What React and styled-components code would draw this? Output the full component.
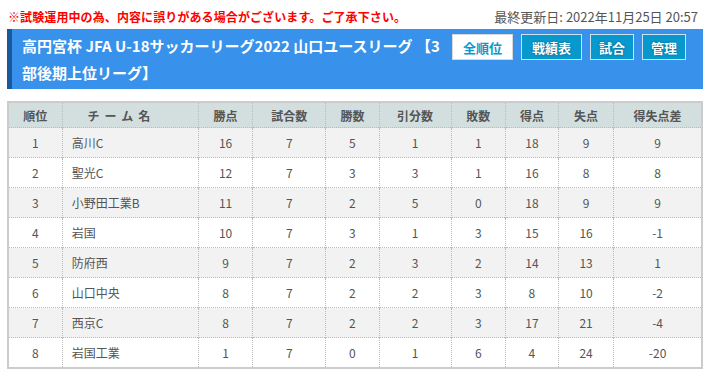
import React from 'react';
import styled, { createGlobalStyle } from 'styled-components';

const GlobalStyle = createGlobalStyle`
  html, body {
    margin: 0;
    padding: 0;
    background: #fff;
  }

  body {
    font-family: "Noto Sans CJK JP", "Noto Sans", sans-serif;
    color: #555;
  }
`;

const Page = styled.div`
  padding: 3px 8px 0 7px;
`;

const TopLine = styled.div`
  display: flex;
  justify-content: space-between;
  align-items: center;
  height: 26px;
  padding: 0 5px 0 1px;
`;

const Notice = styled.span`
  color: #f00;
  font-size: 12px;
  font-weight: 700;
  letter-spacing: 0.1px;
`;

const Updated = styled.span`
  color: #555;
  font-size: 13px;
`;

const HeadBar = styled.div`
  display: flex;
  align-items: flex-start;
  background: #3891ea;
  border-left: 5px solid #19599c;
  padding: 3px 17px 3px 10px;
  min-height: 54px;
`;

const Title = styled.h1`
  flex: 1;
  margin: 0;
  color: #fff;
  font-size: 15px;
  font-weight: 700;
  line-height: 27px;
  max-width: 424px;
  line-break: anywhere;
`;

const Nav = styled.div`
  display: flex;
  gap: 8px;
  margin: 2px 0 0 auto;
`;

const NavButton = styled.a`
  display: flex;
  align-items: center;
  justify-content: center;
  height: 24px;
  padding: 0 ${({ $wide }) => ($wide ? '10px' : '8px')};
  border: 1px solid ${({ $active }) => ($active ? '#d8d8d8' : '#cfe3ee')};
  background: ${({ $active }) => ($active ? '#fff' : '#0798cd')};
  color: ${({ $active }) => ($active ? '#0798cd' : '#fff')};
  font-size: 13px;
  font-weight: 700;
  text-decoration: none;
  text-shadow: ${({ $active }) => ($active ? 'none' : '0 0 2px rgba(0, 0, 0, 0.45)')};
`;

const Table = styled.table`
  width: 696px;
  margin-top: 12px;
  border-collapse: collapse;
  table-layout: fixed;
  border: 2px solid #ccc;
  font-size: 12px;
`;

const HeadCell = styled.th`
  height: 24px;
  padding: 0 ${({ $spaced }) => ($spaced ? '18px' : '0')} 0 0;
  background: #d3dfdf;
  color: #555;
  font-weight: 700;
  border-left: 1px dotted #bbb;
  letter-spacing: ${({ $spaced }) => ($spaced ? '5px' : '0')};

  &:first-child {
    border-left: none;
  }
`;

const Row = styled.tr`
  background: ${({ $odd }) => ($odd ? '#f2f2f2' : '#fff')};
`;

const Cell = styled.td`
  height: 29px;
  padding: 0 ${({ $left }) => ($left ? '9px' : '0')};
  text-align: ${({ $left }) => ($left ? 'left' : 'center')};
  color: #555;
  border-left: 1px dotted #bbb;
  border-top: 1px dotted #bbb;

  &:first-child {
    border-left: none;
  }
`;

const columns = [
  { label: '順位', width: 54 },
  { label: 'チーム名', width: 136, spaced: true },
  { label: '勝点', width: 54 },
  { label: '試合数', width: 73 },
  { label: '勝数', width: 53 },
  { label: '引分数', width: 72 },
  { label: '敗数', width: 54 },
  { label: '得点', width: 53 },
  { label: '失点', width: 55 },
  { label: '得失点差', width: 88 },
];

const standings = [
  [1, '高川C', 16, 7, 5, 1, 1, 18, 9, 9],
  [2, '聖光C', 12, 7, 3, 3, 1, 16, 8, 8],
  [3, '小野田工業B', 11, 7, 2, 5, 0, 18, 9, 9],
  [4, '岩国', 10, 7, 3, 1, 3, 15, 16, -1],
  [5, '防府西', 9, 7, 2, 3, 2, 14, 13, 1],
  [6, '山口中央', 8, 7, 2, 2, 3, 8, 10, -2],
  [7, '西京C', 8, 7, 2, 2, 3, 17, 21, -4],
  [8, '岩国工業', 1, 7, 0, 1, 6, 4, 24, -20],
];

const navItems = [
  { label: '全順位', active: true },
  { label: '戦績表' },
  { label: '試合' },
  { label: '管理' },
];

export default function App() {
  return (
    <Page>
      <GlobalStyle />
      <TopLine>
        <Notice>※試験運用中の為、内容に誤りがある場合がございます。ご了承下さい。</Notice>
        <Updated>最終更新日: 2022年11月25日 20:57</Updated>
      </TopLine>
      <HeadBar>
        <Title>高円宮杯 JFA U-18サッカーリーグ2022 山口ユースリーグ 【3部後期上位リーグ】</Title>
        <Nav>
          {navItems.map(({ label, active }) => (
            <NavButton key={label} href="#" $active={active} $wide={label.length > 2}>
              {label}
            </NavButton>
          ))}
        </Nav>
      </HeadBar>
      <Table>
        <colgroup>
          {columns.map(({ label, width }) => (
            <col key={label} style={{ width }} />
          ))}
        </colgroup>
        <thead>
          <tr>
            {columns.map(({ label, spaced }) => (
              <HeadCell key={label} $spaced={spaced}>{label}</HeadCell>
            ))}
          </tr>
        </thead>
        <tbody>
          {standings.map((team, i) => (
            <Row key={team[0]} $odd={i % 2 === 0}>
              {team.map((value, j) => (
                <Cell key={columns[j].label} $left={j === 1}>{value}</Cell>
              ))}
            </Row>
          ))}
        </tbody>
      </Table>
    </Page>
  );
}
